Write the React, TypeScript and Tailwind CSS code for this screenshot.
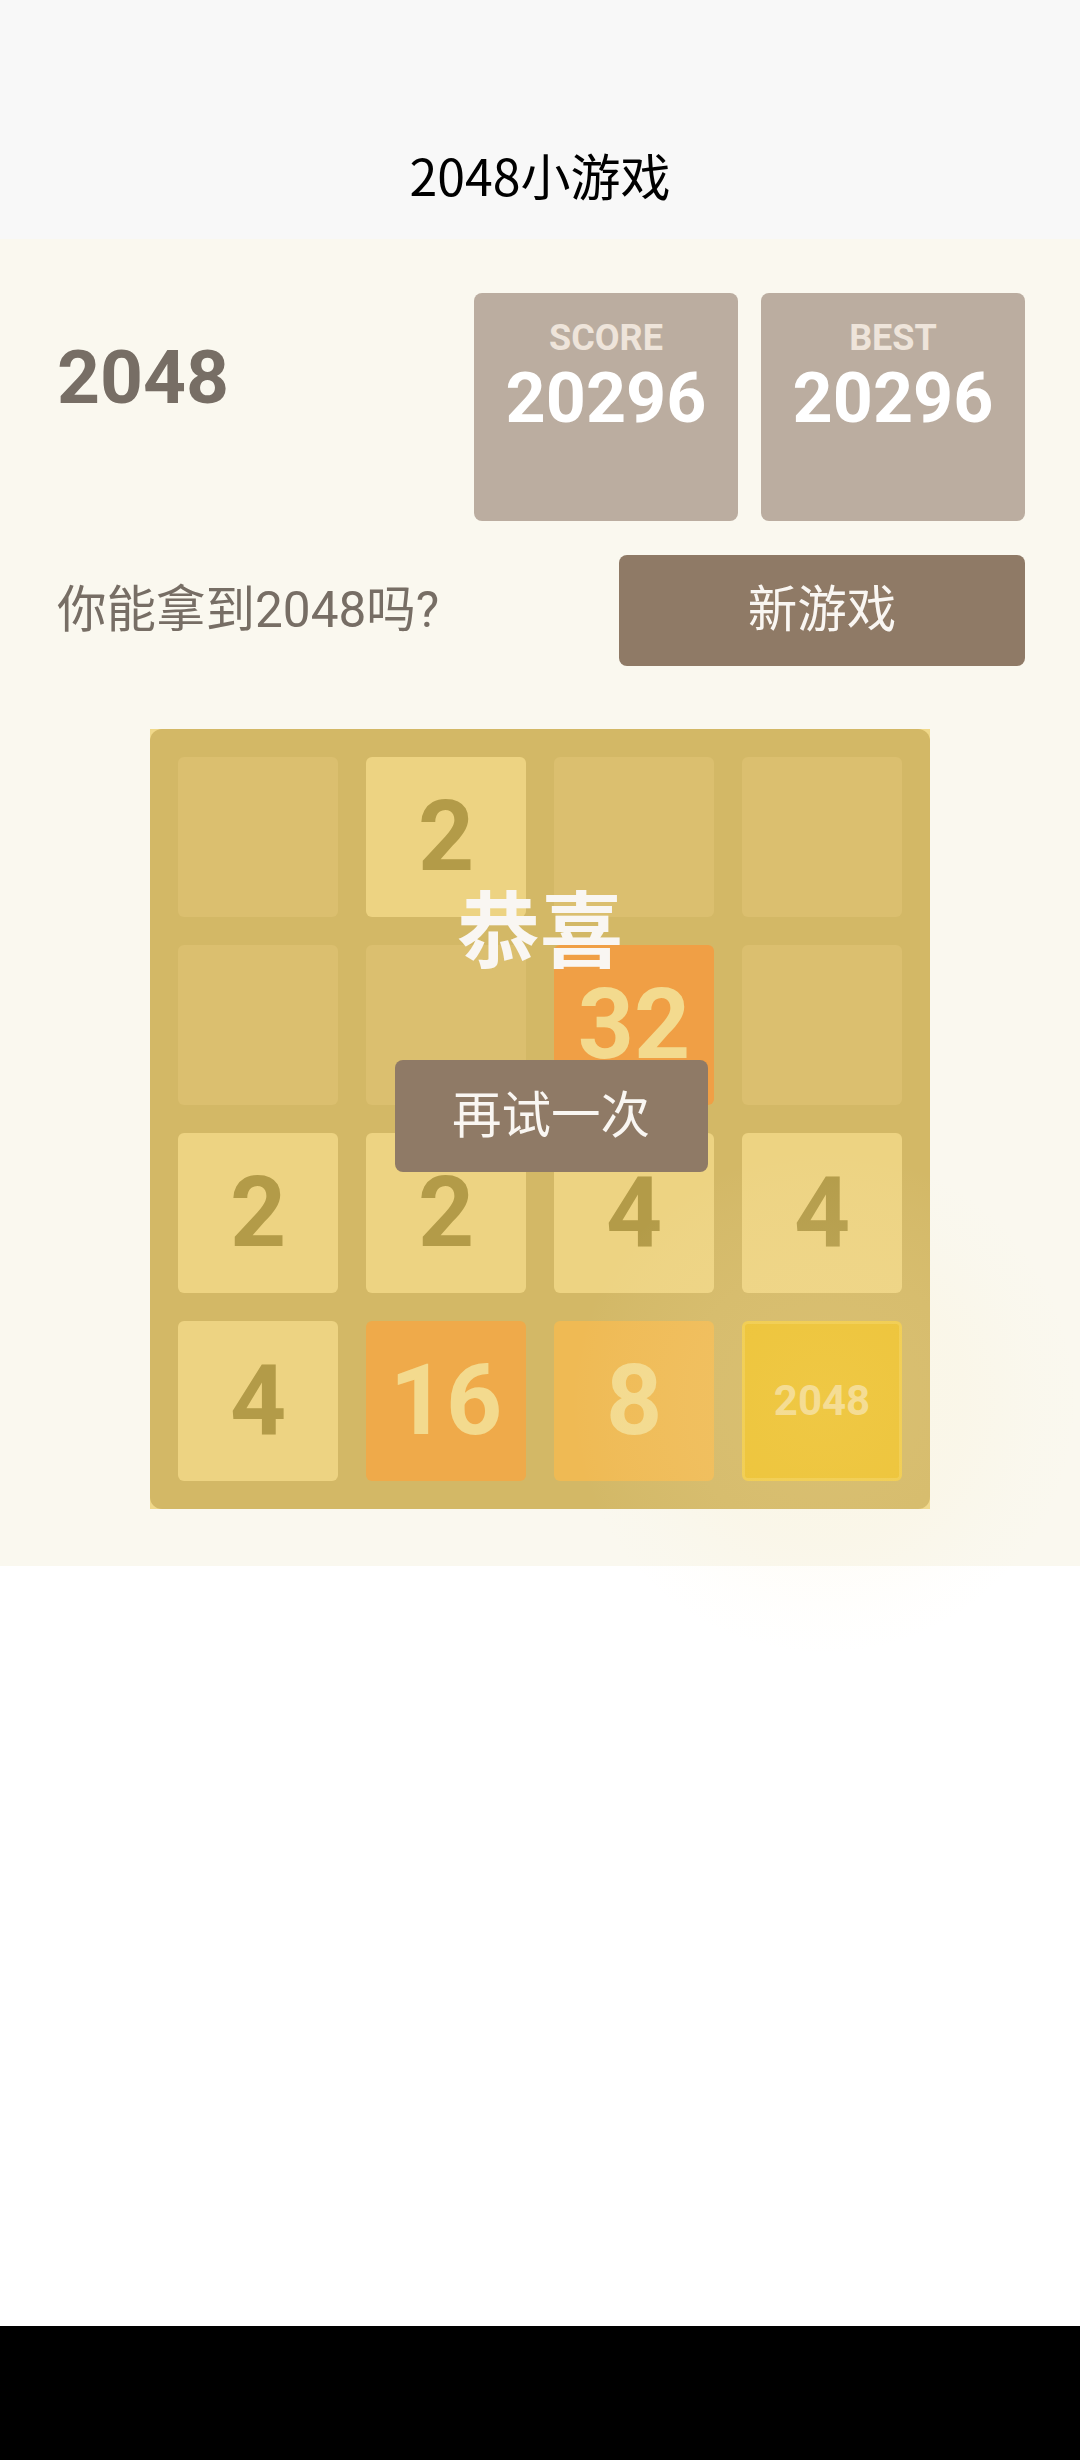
import React from 'react';

type Cell = number | null;

const board: Cell[][] = [
  [null, 2, null, null],
  [null, null, 32, null],
  [2, 2, 4, 4],
  [4, 16, 8, 2048],
];

// tile look by value
const tileStyle = (v: Cell): string => {
  switch (v) {
    case 2:
    case 4:
      return 'bg-[#edd382] text-[#b39b48] text-[98px]';
    case 8:
      return 'bg-[#efba54] text-[#f3da8e] text-[98px]';
    case 16:
      return 'bg-[#efaa4a] text-[#f3da8e] text-[98px]';
    case 32:
      return 'bg-[#f09f45] text-[#f3da8e] text-[98px]';
    case 2048:
      return 'bg-[#ecc12f] text-[#f3da8e] text-[42px] border-[3px] border-[#f0cb4a]';
    default:
      return 'bg-[#dbbf6f]';
  }
};

const ScoreBox: React.FC<{ label: string; value: number }> = ({ label, value }) => (
  <div className="w-[264px] h-[228px] rounded-[8px] bg-[#bbada0] flex flex-col items-center pt-[27px]">
    <div className="text-[36px] leading-none font-bold text-[#eee4da]">{label}</div>
    <div className="mt-[7px] text-[70px] leading-none font-bold text-white">{value}</div>
  </div>
);

export default function App() {
  return (
    <div className="relative w-[1080px] min-h-[2460px] flex flex-col bg-white overflow-hidden font-['Roboto','Noto_Sans_CJK_SC',sans-serif]">
      {/* title bar */}
      <div className="h-[239px] bg-[#f8f8f8] flex justify-center pt-[149px]">
        <div className="text-[50px] leading-none text-black font-['Noto_Sans_CJK_SC',sans-serif]">2048小游戏</div>
      </div>

      {/* game area */}
      <div className="bg-[#faf8ef] px-[55px] pt-[54px] pb-[57px]">
        <div className="flex justify-between items-start">
          <div className="mt-[47px] ml-[2px] text-[75px] leading-none font-bold text-[#776e65]">2048</div>
          <div className="flex gap-[23px]">
            <ScoreBox label="SCORE" value={20296} />
            <ScoreBox label="BEST" value={20296} />
          </div>
        </div>

        <div className="mt-[34px] flex justify-between items-center">
          <div className="ml-[2px] text-[49.5px] leading-none text-[#776e65]">你能拿到2048吗?</div>
          <button className="w-[406px] h-[111px] rounded-[8px] bg-[#8f7a66] text-[49.5px] text-[#f9f6f2]">
            新游戏
          </button>
        </div>

        <div className="mt-[63px] mx-auto w-[780px] h-[780px] bg-[#f0d88a]">
          <div className="relative w-full h-full rounded-[12px] bg-[#d3b866] p-[28px] grid grid-cols-4 grid-rows-4 gap-[28px]">
            {board.flat().map((v, i) => (
              <div
                key={i}
                className={`rounded-[6px] flex items-center justify-center font-bold leading-none ${tileStyle(v)}`}
              >
                {v ?? ''}
              </div>
            ))}

            {/* win overlay */}
            <div className="absolute inset-0 flex flex-col items-center pt-[155px]">
              <div className="text-[83px] leading-none font-bold text-[#f9f6f2] font-['Noto_Sans_CJK_SC',sans-serif]">恭喜</div>
              <button className="mt-[93px] ml-[22px] w-[313px] h-[112px] rounded-[8px] bg-[#8f7a66] text-[49.5px] text-[#f9f6f2]">
                再试一次
              </button>
            </div>
          </div>
        </div>
      </div>

      <div className="flex-1 bg-white" />
      <div className="h-[134px] bg-black" />

      {/* faint ripple glow around the 2048 tile */}
      <div className="pointer-events-none absolute left-[574px] top-[1152px] w-[500px] h-[500px] rounded-full bg-[radial-gradient(circle,rgba(255,236,180,0.16)_0%,rgba(250,232,180,0.1)_40%,rgba(248,236,200,0.04)_60%,rgba(255,255,255,0)_72%)]" />
    </div>
  );
}
